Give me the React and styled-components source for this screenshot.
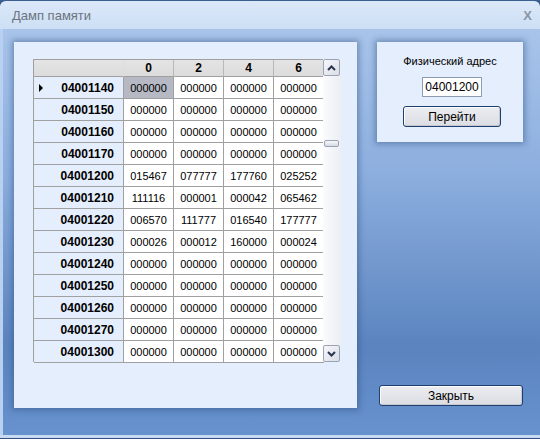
import React from "react";
import styled, { createGlobalStyle } from "styled-components";

const Global = createGlobalStyle`
  html, body { margin: 0; padding: 0; background: #3a5f90; }
  body { font-family: "Liberation Sans", Arial, sans-serif; }
`;

const Window = styled.div`
  width: 540px;
  height: 439px;
  display: flex;
  flex-direction: column;
  overflow: hidden;
  border-radius: 6px 6px 0 0;
  background: #2f5283;
  box-sizing: border-box;
  border-top: 1px solid #3b5f8f;
`;

const TitleBar = styled.div`
  height: 28px;
  flex-shrink: 0;
  display: flex;
  align-items: center;
  justify-content: space-between;
  padding: 0 8px 0 12px;
  background: linear-gradient(#dbe8f8, #cddff5);
  border-radius: 5px 5px 0 0;
  color: #6b7480;
  font-size: 13px;
`;

const Close = styled.span`
  font-weight: bold;
  font-size: 13px;
  color: #8a96a8;
`;

const Body = styled.div`
  flex: 1;
  display: flex;
  gap: 20px;
  padding: 13px 16px 0 11px;
  margin-bottom: 4px;
  background: linear-gradient(#a8c4ea 0%, #8dafdf 35%, #5b84bf 78%, #6792cd 100%);
  border-left: 3px solid #b9d1f0;
  position: relative;
  box-sizing: border-box;
  &::after {
    content: "";
    position: absolute;
    left: -3px;
    right: 0;
    bottom: -3px;
    height: 3px;
    background: #c7daf2;
  }
`;

const Panel = styled.div`
  background: #e4eefc;
  box-shadow: 0 0 6px 2px rgba(40, 70, 120, 0.45);
`;

const LeftPanel = styled(Panel)`
  width: 343px;
  height: 366px;
  padding: 17px 0 0 19px;
  box-sizing: border-box;
`;

const RightCol = styled.div`
  width: 146px;
  display: flex;
  flex-direction: column;
  justify-content: space-between;
  align-items: flex-end;
  height: 364px;
`;

const RightPanel = styled(Panel)`
  width: 146px;
  height: 100px;
  display: flex;
  flex-direction: column;
  align-items: center;
  padding-top: 12px;
  box-sizing: border-box;
  font-size: 11px;
  color: #000;
`;

const Label = styled.div`
  height: 14px;
  line-height: 14px;
`;

const Input = styled.div`
  margin-top: 9px;
  margin-left: 4px;
  width: 58px;
  height: 18px;
  border: 1px solid #8c9bb0;
  background: #fff;
  font-size: 12px;
  line-height: 18px;
  text-align: center;
`;

const Button = styled.div`
  width: ${(p) => p.w}px;
  height: ${(p) => p.h}px;
  box-sizing: border-box;
  border: 1px solid #1f3f6e;
  border-radius: 3px;
  background: linear-gradient(#ecedf1, #dcdde3);
  box-shadow: inset 1px 1px 0 #fff, inset -1px -1px 0 #c5c8d2;
  font-size: 12px;
  display: flex;
  align-items: center;
  justify-content: center;
  color: #000;
  margin-top: ${(p) => p.mt || 0}px;
  margin-left: ${(p) => p.ml || 0}px;
`;

const Grid = styled.div`
  display: flex;
  width: 308px;
  height: 303px;
`;

const Table = styled.div`
  display: grid;
  grid-template-columns: 90px repeat(4, 50px);
  grid-auto-rows: 22px;
  grid-template-rows: 17px;
  width: 290px;
  border-left: 1px solid #a0a0a0;
  border-top: 1px solid #a0a0a0;
  box-sizing: border-box;
`;

const HeadCell = styled.div`
  background: linear-gradient(#e4e4e4, #dcdcdc);
  border-right: 1px solid ${(p) => (p.corner ? "#dcdcdc" : "#b8b8b8")};
  border-bottom: 1px solid #a0a0a0;
  font-weight: bold;
  font-size: 12px;
  display: flex;
  align-items: center;
  justify-content: center;
  box-sizing: border-box;
`;

const RowHead = styled.div`
  background: #e4eefc;
  border-right: 1px solid #a0a0a0;
  border-bottom: 1px solid #a0a0a0;
  font-weight: bold;
  font-size: 12px;
  display: flex;
  align-items: center;
  justify-content: flex-end;
  padding-right: 9px;
  position: relative;
  box-sizing: border-box;
`;

const Arrow = styled.span`
  position: absolute;
  left: 5px;
  top: 7px;
  width: 0;
  height: 0;
  border-top: 4px solid transparent;
  border-bottom: 4px solid transparent;
  border-left: 4px solid #000;
`;

const Cell = styled.div`
  background: ${(p) => (p.sel ? "#b6b9c4" : "#fff")};
  border-right: 1px solid #a0a0a0;
  border-bottom: 1px solid #a0a0a0;
  font-size: 11px;
  display: flex;
  align-items: center;
  justify-content: center;
  box-sizing: border-box;
`;

const Scroll = styled.div`
  width: 18px;
  display: flex;
  flex-direction: column;
  background: linear-gradient(90deg, #fbfbfd, #eceef3);
`;

const ScrollBtn = styled.div`
  width: 17px;
  height: 17px;
  box-sizing: border-box;
  border: 1px solid #9aa3b3;
  border-radius: 2px;
  background: linear-gradient(135deg, #f6f7fb, #d9dde6);
  display: flex;
  align-items: center;
  justify-content: center;
`;

const Track = styled.div`
  flex: 1;
  position: relative;
`;

const Thumb = styled.div`
  position: absolute;
  left: 1px;
  top: 64px;
  width: 15px;
  height: 7px;
  box-sizing: border-box;
  border: 1px solid #9aa3b3;
  border-radius: 2px;
  background: linear-gradient(#f8f8fb, #d5d9e2);
`;

const Chevron = ({ up }) => (
  <svg width="9" height="6" viewBox="0 0 9 6">
    <path
      d={up ? "M1 5 L4.5 1.5 L8 5" : "M1 1 L4.5 4.5 L8 1"}
      fill="none"
      stroke="#2c3550"
      strokeWidth="2"
    />
  </svg>
);

const rows = [
  ["04001140", ["000000", "000000", "000000", "000000"]],
  ["04001150", ["000000", "000000", "000000", "000000"]],
  ["04001160", ["000000", "000000", "000000", "000000"]],
  ["04001170", ["000000", "000000", "000000", "000000"]],
  ["04001200", ["015467", "077777", "177760", "025252"]],
  ["04001210", ["111116", "000001", "000042", "065462"]],
  ["04001220", ["006570", "111777", "016540", "177777"]],
  ["04001230", ["000026", "000012", "160000", "000024"]],
  ["04001240", ["000000", "000000", "000000", "000000"]],
  ["04001250", ["000000", "000000", "000000", "000000"]],
  ["04001260", ["000000", "000000", "000000", "000000"]],
  ["04001270", ["000000", "000000", "000000", "000000"]],
  ["04001300", ["000000", "000000", "000000", "000000"]],
];

export default function App() {
  return (
    <>
      <Global />
      <Window>
        <TitleBar>
          <span>Дамп памяти</span>
          <Close>X</Close>
        </TitleBar>
        <Body>
          <LeftPanel>
            <Grid>
              <Table>
                <HeadCell corner />
                {["0", "2", "4", "6"].map((h) => (
                  <HeadCell key={h}>{h}</HeadCell>
                ))}
                {rows.map(([addr, vals], i) => (
                  <React.Fragment key={addr}>
                    <RowHead>
                      {i === 0 && <Arrow />}
                      {addr}
                    </RowHead>
                    {vals.map((v, j) => (
                      <Cell key={j} sel={i === 0 && j === 0}>
                        {v}
                      </Cell>
                    ))}
                  </React.Fragment>
                ))}
              </Table>
              <Scroll>
                <ScrollBtn>
                  <Chevron up />
                </ScrollBtn>
                <Track>
                  <Thumb />
                </Track>
                <ScrollBtn>
                  <Chevron />
                </ScrollBtn>
              </Scroll>
            </Grid>
          </LeftPanel>
          <RightCol>
            <RightPanel>
              <Label>Физический адрес</Label>
              <Input>04001200</Input>
              <Button w={98} h={21} mt={9} ml={4}>
                Перейти
              </Button>
            </RightPanel>
            <Button w={144} h={21}>
              Закрыть
            </Button>
          </RightCol>
        </Body>
      </Window>
    </>
  );
}
